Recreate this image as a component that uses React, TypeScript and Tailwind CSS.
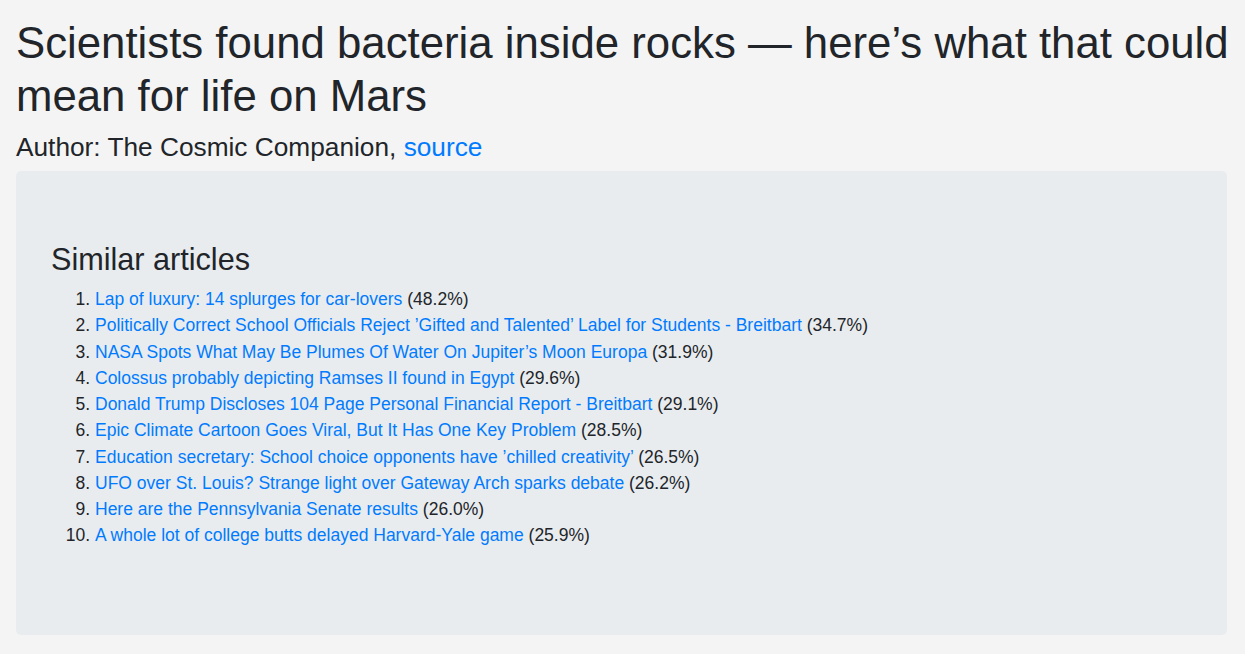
const articles = [
  { title: "Lap of luxury: 14 splurges for car-lovers", score: "48.2%" },
  {
    title:
      "Politically Correct School Officials Reject \u2019Gifted and Talented\u2019 Label for Students - Breitbart",
    score: "34.7%",
  },
  {
    title: "NASA Spots What May Be Plumes Of Water On Jupiter\u2019s Moon Europa",
    score: "31.9%",
  },
  { title: "Colossus probably depicting Ramses II found in Egypt", score: "29.6%" },
  {
    title: "Donald Trump Discloses 104 Page Personal Financial Report - Breitbart",
    score: "29.1%",
  },
  {
    title: "Epic Climate Cartoon Goes Viral, But It Has One Key Problem",
    score: "28.5%",
  },
  {
    title:
      "Education secretary: School choice opponents have \u2019chilled creativity\u2019",
    score: "26.5%",
  },
  {
    title: "UFO over St. Louis? Strange light over Gateway Arch sparks debate",
    score: "26.2%",
  },
  { title: "Here are the Pennsylvania Senate results", score: "26.0%" },
  { title: "A whole lot of college butts delayed Harvard-Yale game", score: "25.9%" },
];

export default function App() {
  return (
    <div className="min-h-[654px] bg-[#f4f4f4] pl-4 pr-[18px] pt-[17px] pb-5 text-[#212529] font-['Liberation_Sans',Arial,sans-serif] text-[17.5px] leading-[26.25px]">
      <h1 className="text-[43.75px] leading-[52.5px] mb-[8.75px] -mr-[8px]">
        Scientists found bacteria inside rocks — here’s what that could mean for life on Mars
      </h1>
      <h4 className="text-[26.25px] leading-[31.5px] pt-px">
        Author: The Cosmic Companion,{" "}
        <a href="#" className="text-[#007bff]">
          source
        </a>
      </h4>

      <div className="bg-[#e9ecef] rounded-[5px] px-[35px] pt-[70px] pb-[69px] mt-[7.25px]">
        <h3 className="text-[30.625px] leading-[36.75px] mb-[8.75px]">Similar articles</h3>
        <ol className="list-decimal pl-[44px] mb-[17.5px]">
          {articles.map((a, i) => (
            <li key={i}>
              <a href="#" className="text-[#007bff]">
                {a.title}
              </a>{" "}
              ({a.score})
            </li>
          ))}
        </ol>
      </div>
    </div>
  );
}
